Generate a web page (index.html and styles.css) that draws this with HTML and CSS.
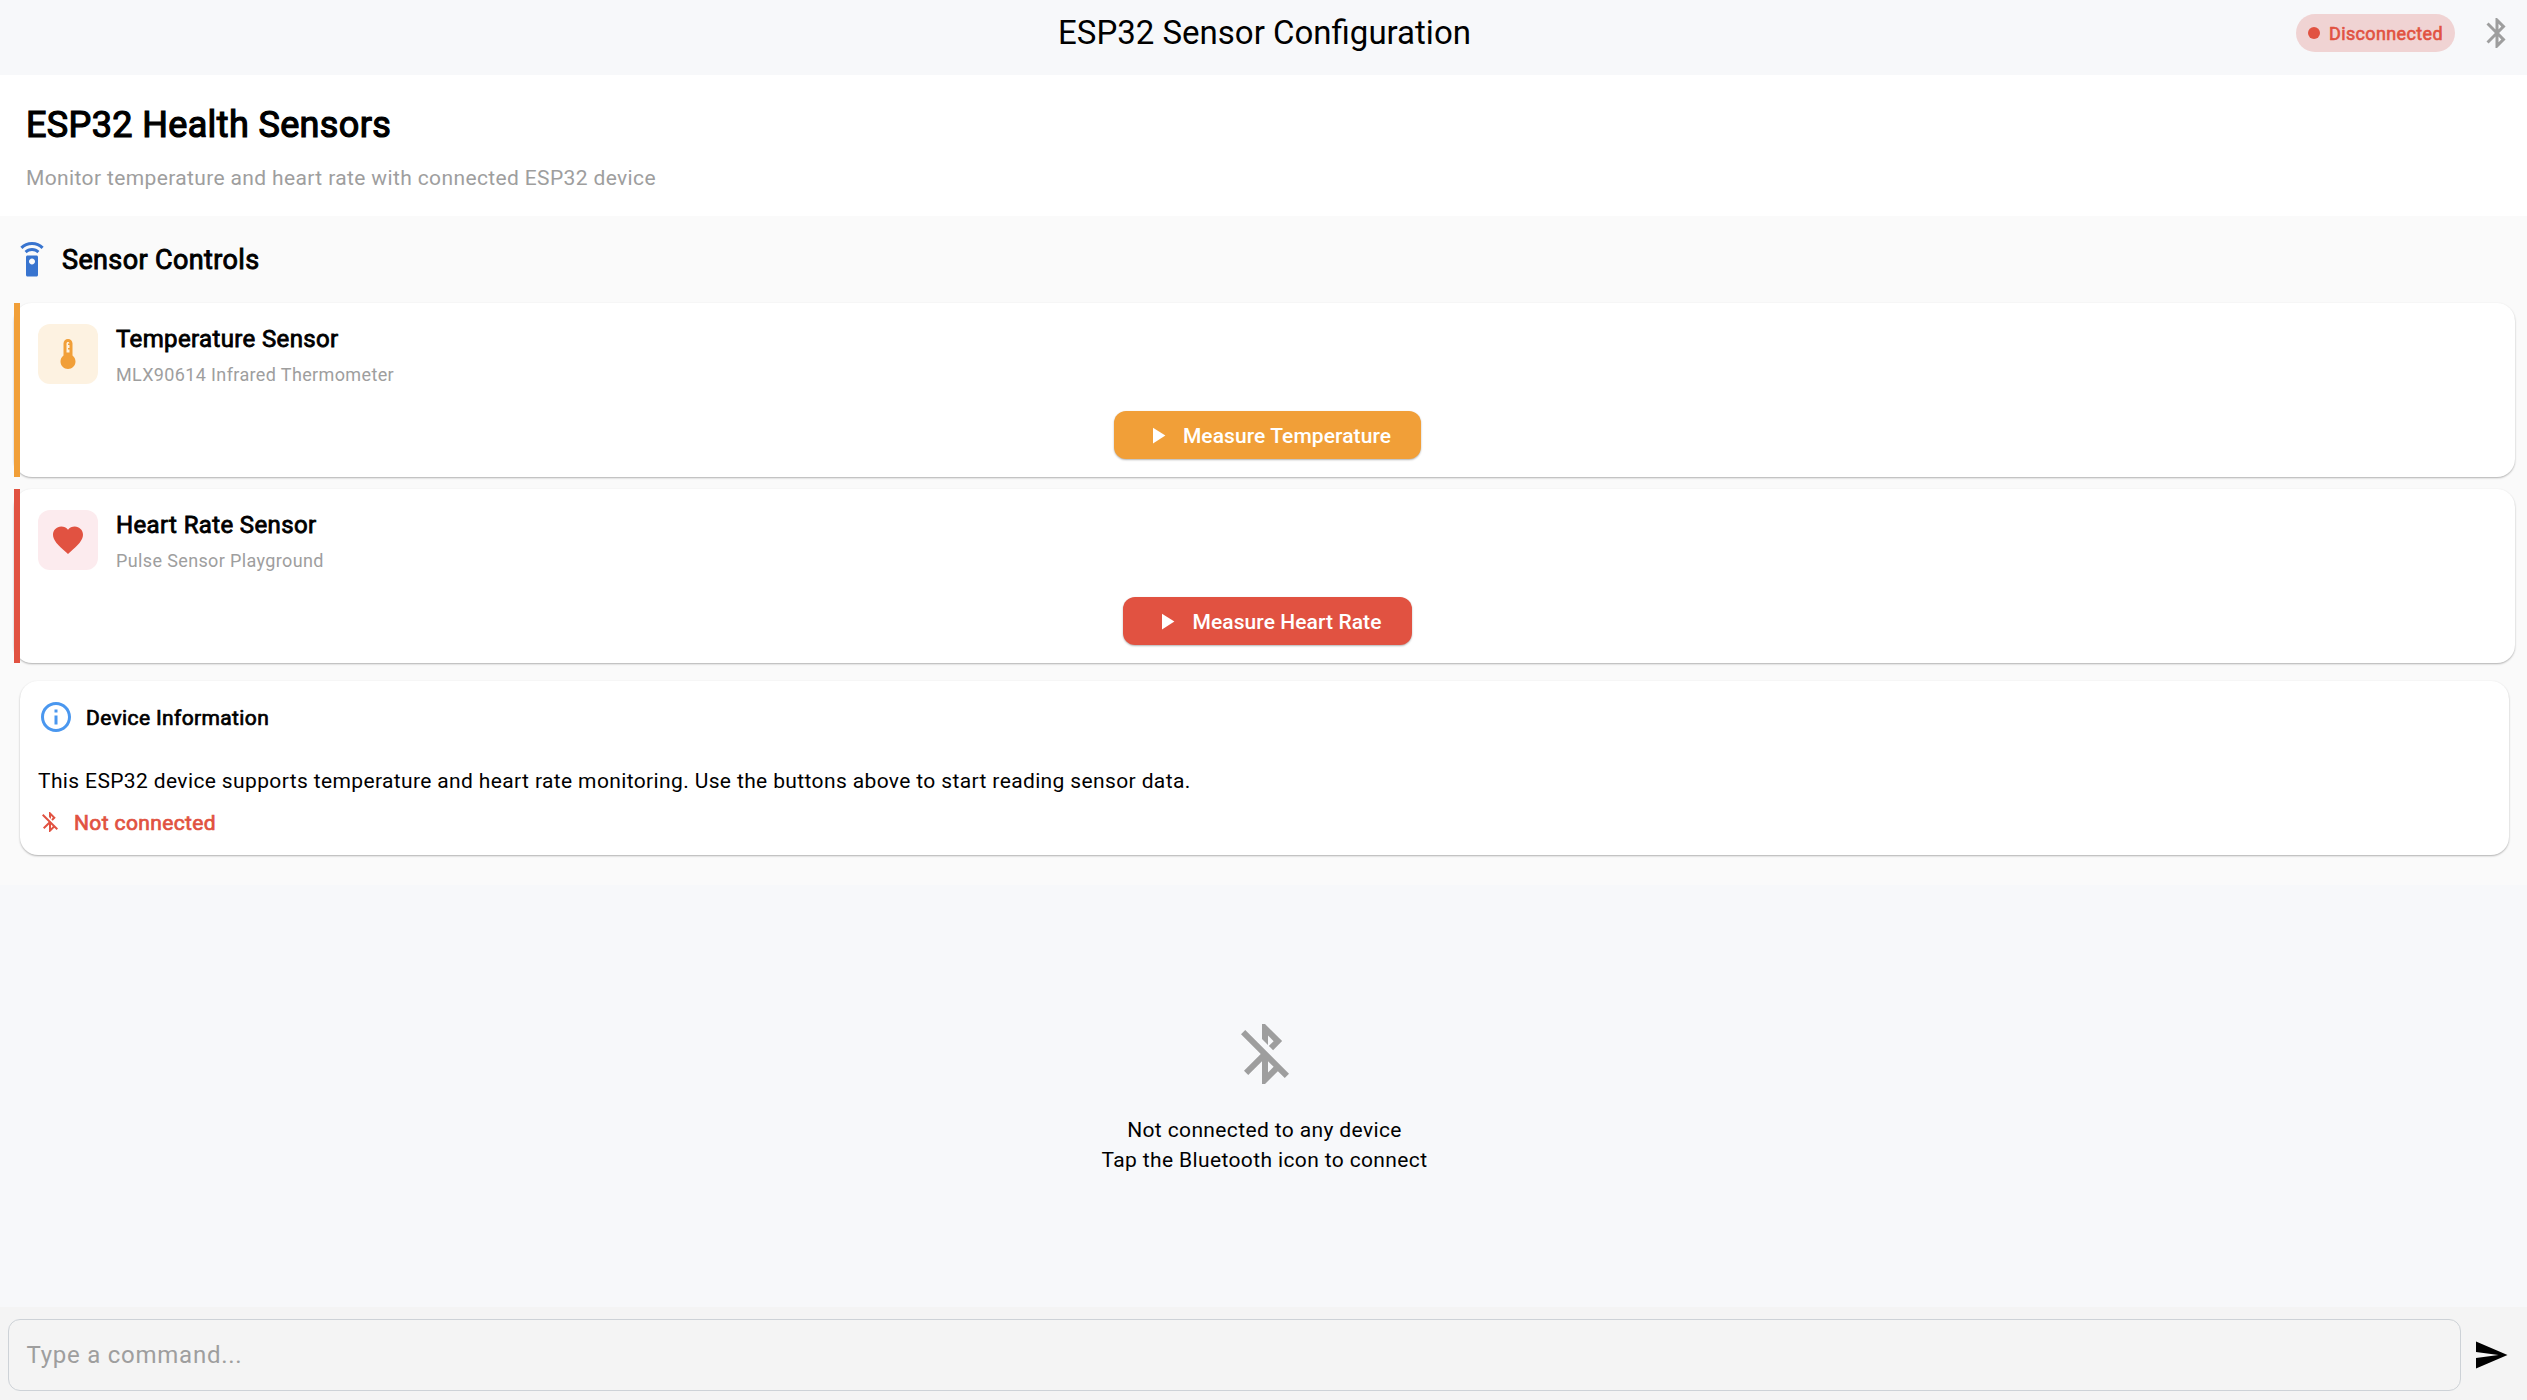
FILE: index.html
```html
<!DOCTYPE html>
<html lang="en">
<head>
<meta charset="utf-8">
<title>ESP32 Sensor Configuration</title>
<link rel="stylesheet" href="styles.css">
</head>
<body>
<header class="appbar">
  <h1 class="appbar-title">ESP32 Sensor Configuration</h1>
  <div class="appbar-actions">
    <div class="status"><i class="dot"></i><span class="fb">Disconnected</span></div>
    <svg class="icon bt" viewBox="0 0 24 24"><path d="M17.71 7.71L12 2h-1v7.59L6.41 5 5 6.41 10.59 12 5 17.59 6.41 19 11 14.41V22h1l5.71-5.71-4.3-4.29 4.3-4.29zM13 5.83l1.88 1.88L13 9.59V5.83zm1.88 10.46L13 18.17v-3.76l1.88 1.88z"/></svg>
  </div>
</header>
<section class="intro">
  <h2 class="intro-title fb">ESP32 Health Sensors</h2>
  <p class="intro-text">Monitor temperature and heart rate with connected ESP32 device</p>
</section>
<main class="sensors">
  <div class="section-head">
    <svg class="icon remote" viewBox="0 0 24 24"><path d="M15 9H9c-.55 0-1 .45-1 1v12c0 .55.45 1 1 1h6c.55 0 1-.45 1-1V10c0-.55-.45-1-1-1zm-3 6c-1.1 0-2-.9-2-2s.9-2 2-2 2 .9 2 2-.9 2-2 2zM7.05 6.05l1.41 1.41C9.37 6.56 10.62 6 12 6s2.63.56 3.54 1.46l1.41-1.41C15.68 4.78 13.93 4 12 4s-3.68.78-4.95 2.05zM12 0C8.96 0 6.21 1.23 4.22 3.22l1.41 1.41C7.26 3.01 9.51 2 12 2s4.74 1.01 6.36 2.64l1.41-1.41C17.79 1.23 15.04 0 12 0z"/></svg>
    <h3 class="section-title fb">Sensor Controls</h3>
  </div>
  <article class="sensor temp">
    <div class="sensor-head">
      <div class="badge"><svg class="icon" viewBox="0 0 24 24"><path d="M15 13V5c0-1.66-1.34-3-3-3S9 3.34 9 5v8c-1.21.91-2 2.37-2 4 0 2.76 2.24 5 5 5s5-2.24 5-5c0-1.63-.79-3.09-2-4zm-4-8c0-.55.45-1 1-1s1 .45 1 1h-1v1h1v2h-1v1h1v2h-2V5z"/></svg></div>
      <div class="sensor-text">
        <h4 class="sensor-title fb">Temperature Sensor</h4>
        <p class="sensor-sub">MLX90614 Infrared Thermometer</p>
      </div>
    </div>
    <button class="btn"><svg class="icon play" viewBox="0 0 24 24"><path d="M8 5v14l11-7z"/></svg><span>Measure Temperature</span></button>
  </article>
  <article class="sensor heart">
    <div class="sensor-head">
      <div class="badge"><svg class="icon" viewBox="0 0 24 24"><path d="M12 21.35l-1.45-1.32C5.4 15.36 2 12.28 2 8.5 2 5.42 4.42 3 7.5 3c1.74 0 3.41.81 4.5 2.09C13.09 3.81 14.76 3 16.5 3 19.58 3 22 5.42 22 8.5c0 3.78-3.4 6.86-8.55 11.54L12 21.35z"/></svg></div>
      <div class="sensor-text">
        <h4 class="sensor-title fb">Heart Rate Sensor</h4>
        <p class="sensor-sub">Pulse Sensor Playground</p>
      </div>
    </div>
    <button class="btn"><svg class="icon play" viewBox="0 0 24 24"><path d="M8 5v14l11-7z"/></svg><span>Measure Heart Rate</span></button>
  </article>
  <article class="info">
    <div class="info-head">
      <svg class="icon info-icon" viewBox="0 0 24 24"><path d="M11 7h2v2h-2zm0 4h2v6h-2zm1-9C6.48 2 2 6.48 2 12s4.48 10 10 10 10-4.48 10-10S17.52 2 12 2zm0 18c-4.41 0-8-3.59-8-8s3.59-8 8-8 8 3.59 8 8-3.59 8-8 8z"/></svg>
      <h4 class="info-title fb">Device Information</h4>
    </div>
    <p class="info-text">This ESP32 device supports temperature and heart rate monitoring. Use the buttons above to start reading sensor data.</p>
    <div class="link-state">
      <svg class="icon" viewBox="0 0 24 24"><path d="M13 5.83l1.88 1.88-1.6 1.6 1.41 1.41 3.02-3.02L12 2h-1v5.03l2 2v-3.2zM5.41 4L4 5.41 10.59 12 5 17.59 6.41 19 11 14.41V22h1l4.29-4.29 2.3 2.29L20 18.59 5.41 4zM13 18.17v-3.76l1.88 1.88L13 18.17z"/></svg>
      <span class="fb">Not connected</span>
    </div>
  </article>
</main>
<section class="empty">
  <svg class="icon" viewBox="0 0 24 24"><path d="M13 5.83l1.88 1.88-1.6 1.6 1.41 1.41 3.02-3.02L12 2h-1v5.03l2 2v-3.2zM5.41 4L4 5.41 10.59 12 5 17.59 6.41 19 11 14.41V22h1l4.29-4.29 2.3 2.29L20 18.59 5.41 4zM13 18.17v-3.76l1.88 1.88L13 18.17z"/></svg>
  <p class="empty-text">Not connected to any device<br>Tap the Bluetooth icon to connect</p>
</section>
<footer class="composer">
  <div class="field">Type a command...</div>
  <svg class="icon send" viewBox="0 0 24 24"><path d="M2.01 21L23 12 2.01 3 2 10l15 2-15 2z"/></svg>
</footer>
</body>
</html>
```
FILE: styles.css
```css
* { box-sizing: border-box; margin: 0; padding: 0; }

body {
  width: 2527px;
  height: 1400px;
  display: flex;
  flex-direction: column;
  overflow: hidden;
  background: #f7f8fa;
  color: #000;
  font-family: Roboto, "Liberation Sans", sans-serif;
  font-size: 21px;
  line-height: 30px;
  letter-spacing: 0.37px;
}

h1, h2, h3, h4 { font-weight: 400; }

/* emboldened regular weight: keeps the regular advance widths */
.fb { -webkit-text-stroke: 0.034em currentColor; }

.icon { display: block; flex: none; width: 36px; height: 36px; fill: currentColor; }

.appbar {
  height: 75px;
  padding: 0 12px 9px;
  display: grid;
  grid-template-columns: 1fr auto 1fr;
  align-items: center;
}
.appbar-title { grid-column: 2; padding-left: 2px; font-size: 33px; line-height: 42px; letter-spacing: 0; }
.appbar-actions { display: flex; justify-content: flex-end; align-items: center; gap: 24px; }
.status {
  height: 38px;
  padding: 0 12px;
  display: flex;
  align-items: center;
  gap: 9px;
  border-radius: 19px;
  background: #f0d3d3;
  color: #e15241;
  font-size: 18px;
}
.status .fb { padding-top: 2px; }
.dot { width: 12px; height: 12px; border-radius: 50%; background: #e15241; }
.bt { color: #9e9e9e; }

.intro { height: 141px; padding: 25px 24px 23px 26px; display: flex; flex-direction: column; gap: 12px; background: #fff; }
.intro-title { font-size: 36px; line-height: 51px; }
.intro-text { color: #9e9e9e; }

.sensors { height: 669px; padding: 26px 12px 30px 14px; background: #fafafa; }
.section-head { display: flex; align-items: center; gap: 12px; height: 36px; margin-bottom: 25px; }
.remote { color: #3874cf; }
.section-title { font-size: 27px; line-height: 36px; }

.sensor {
  position: relative;
  height: 174px;
  margin-bottom: 12px;
  padding: 18px 18px 18px 24px;
  display: flex;
  flex-direction: column;
  align-items: center;
  gap: 24px;
  border-radius: 18px;
  background: #fff;
  box-shadow: 0 1px 2px rgba(0, 0, 0, 0.3);
}
/* square accent bar over the card's rounded left edge */
.sensor::before {
  content: "";
  position: absolute;
  inset: 0 auto 0 0;
  width: 6px;
  background: var(--accent);
}
.temp { --accent: #f19f38; --tint: #fdf2e1; }
.heart { --accent: #e15241; --tint: #fcebee; }
.sensor-head { align-self: stretch; display: flex; align-items: center; gap: 18px; height: 66px; }
.badge { width: 60px; height: 60px; display: grid; place-items: center; border-radius: 12px; background: var(--tint); color: var(--accent); }
.sensor-text { padding-top: 2px; display: flex; flex-direction: column; gap: 6px; }
.sensor-title { font-size: 24px; line-height: 34px; }
.sensor-sub { font-size: 18px; line-height: 26px; color: #9e9e9e; }

.btn {
  height: 48px;
  padding: 0 30px;
  display: flex;
  align-items: center;
  gap: 12px;
  border: 0;
  border-radius: 12px;
  background: var(--accent);
  color: #fff;
  font: 500 21px/30px Roboto, sans-serif;
  letter-spacing: 0.085px;
  box-shadow: 0 1px 2px rgba(0, 0, 0, 0.3);
}
.btn span { padding-top: 2px; }
.play { width: 27px; height: 27px; }

.info {
  height: 174px;
  margin: 18px 6px 0;
  padding: 18px;
  border-radius: 18px;
  background: #fff;
  box-shadow: 0 1px 2px rgba(0, 0, 0, 0.3);
}
.info-head { display: flex; align-items: center; gap: 12px; height: 36px; margin-bottom: 31px; }
.info-icon { color: #4a97ef; }
.info-title { padding-top: 2px; }
.info-text { margin-bottom: 11px; }
.link-state { display: flex; align-items: center; gap: 12px; height: 30px; color: #e15241; }
.link-state .icon { width: 24px; height: 24px; }
.link-state .fb { padding-top: 2px; }

.empty {
  flex: 1;
  padding: 1px 0 0 2px;
  display: flex;
  flex-direction: column;
  align-items: center;
  justify-content: center;
  gap: 25px;
  text-align: center;
}
.empty .icon { width: 72px; height: 72px; color: #9e9e9e; }

.composer { height: 93px; padding: 12px 18px 9px 8px; display: flex; align-items: center; gap: 12px; background: #f4f4f4; }
.field {
  flex: 1;
  height: 72px;
  padding: 0 17.5px;
  display: flex;
  align-items: center;
  border: 1px solid #cdd2d7;
  border-radius: 12px;
  color: #9e9e9e;
  font-size: 24px;
  letter-spacing: 0.75px;
}
```
